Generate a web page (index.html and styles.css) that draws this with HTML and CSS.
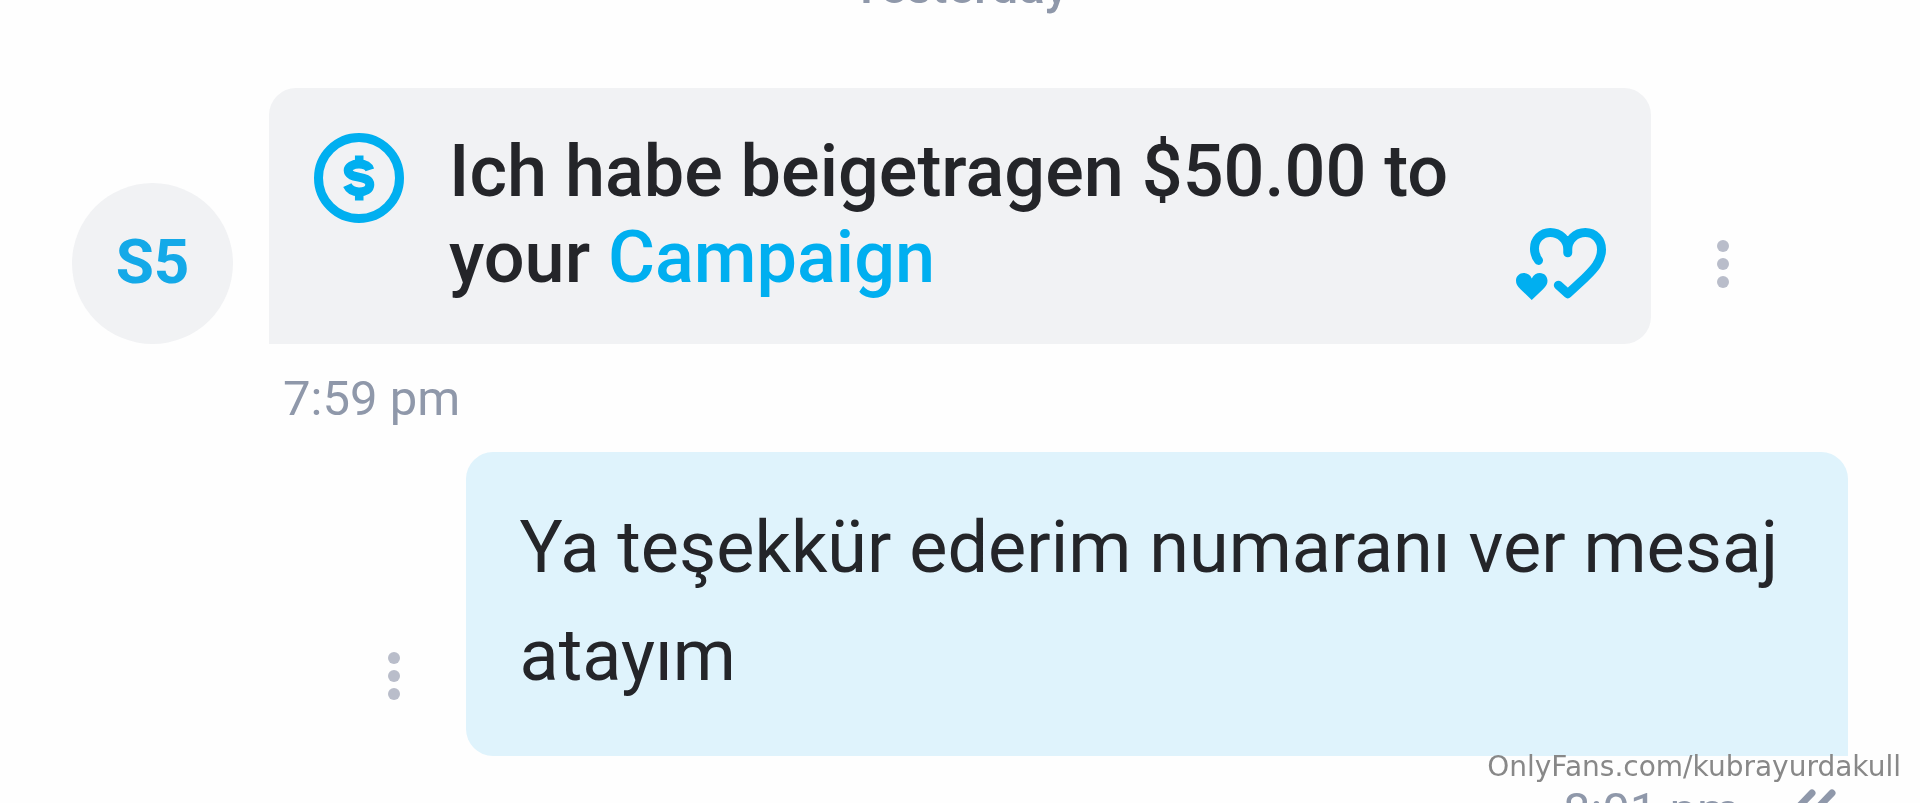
FILE: index.html
```html
<!DOCTYPE html>
<html lang="tr">
<head>
    <meta charset="UTF-8">
    <meta name="viewport" content="width=device-width, initial-scale=1.0">
    <title>Chat</title>
    <link rel="stylesheet" href="styles.css">
</head>
<body>
    <main class="chat">
        <div class="chat-date">Yesterday</div>

        <div class="message">
            <div class="message-row">
                <div class="avatar">S5</div>
                <div class="bubble bubble-tip">
                    <svg class="icon" viewBox="0 0 24 24" aria-hidden="true">
                        <circle cx="12" cy="12" r="9" fill="none" stroke="currentColor" stroke-width="2"/>
                        <path d="M14.4 10.2 C14.1 9.3 13.1 8.9 12 8.9 C10.6 8.9 9.6 9.5 9.6 10.3 C9.6 12.5 14.4 11.1 14.4 13.5 C14.4 14.5 13.4 15.1 12 15.1 C10.8 15.1 9.9 14.7 9.4 13.6" fill="none" stroke="currentColor" stroke-width="2"/>
                        <path d="M11.1 7h1.9v2h-1.9zM11.1 15h1.9v2h-1.9z" fill="currentColor"/>
                    </svg>
                    <p class="tip-text">Ich habe beigetragen $50.00 to your <a href="#">Campaign</a></p>
                    <button type="button" class="btn-like" aria-label="Like">
                        <svg class="icon" viewBox="0 0 24 24" aria-hidden="true">
                            <path d="M7 11.2 C6.4 10.4 6.1 9.4 6.1 8.6 C6.1 6.6 7.6 5 9.6 5 C11.8 5 13.5 6.7 13.5 8.7 V9.5 V8.7 C13.5 6.7 15.2 5 17.4 5 C19.5 5 21 6.6 21 8.8 C21 11.6 18.9 13.5 17.3 15.1 L13.5 18.6 L11.4 16.7" fill="none" stroke="currentColor" stroke-width="2" stroke-linecap="round" stroke-linejoin="round"/>
                            <path d="M5.5 20 L3 17.6 C2.3 16.9 2 16.4 2 15.7 C2 14.7 2.8 14 3.7 14 C4.5 14 5.2 14.4 5.5 15.2 C5.9 14.4 6.6 14 7.3 14 C8.3 14 9 14.8 9 15.7 C9 16.4 8.7 16.9 8 17.6 Z" fill="currentColor"/>
                        </svg>
                    </button>
                </div>
                <button type="button" class="btn-more" aria-label="More">
                    <svg class="icon" viewBox="0 0 108 108" fill="currentColor" aria-hidden="true">
                        <circle cx="54" cy="36" r="6"/>
                        <circle cx="54" cy="54" r="6"/>
                        <circle cx="54" cy="72" r="6"/>
                    </svg>
                </button>
            </div>
            <div class="message-time">7:59 pm</div>
        </div>

        <div class="message message-own">
            <div class="message-row">
                <button type="button" class="btn-more" aria-label="More">
                    <svg class="icon" viewBox="0 0 108 108" fill="currentColor" aria-hidden="true">
                        <circle cx="54" cy="36" r="6"/>
                        <circle cx="54" cy="54" r="6"/>
                        <circle cx="54" cy="72" r="6"/>
                    </svg>
                </button>
                <div class="bubble bubble-own">
                    <p>Ya teşekkür ederim numaranı ver mesaj atayım</p>
                </div>
            </div>
            <div class="message-time">
                8:01 pm
                <svg class="icon-read" viewBox="0 0 72 58" aria-hidden="true">
                    <path d="M2 28 L11 37 L36 11 M25 31 L31 37 L56 11" fill="none" stroke="currentColor" stroke-width="7" stroke-linecap="round"/>
                </svg>
            </div>
        </div>
    </main>

    <div class="watermark">OnlyFans.com/kubrayurdakull</div>
</body>
</html>
```

FILE: styles.css
```css
* {
    margin: 0;
    padding: 0;
    box-sizing: border-box;
}

body {
    font-family: Roboto, 'Liberation Sans', sans-serif;
    background: #fefefe;
    color: #242529;
    height: 100vh;
    overflow: hidden;
}

.chat {
    padding: 0 72px;
}

/* the list is scrolled, so the date is partly out of view */
.chat-date {
    margin-top: -42px;
    margin-bottom: 72px;
    font-size: 49px;
    line-height: 58px;
    font-weight: 500;
    text-align: center;
    color: #8f98aa;
}

.message-row {
    display: flex;
    align-items: flex-end;
}

.message-own .message-row {
    justify-content: flex-end;
}

.avatar {
    display: flex;
    align-items: center;
    justify-content: center;
    flex-shrink: 0;
    width: 161px;
    height: 161px;
    margin-right: 36px;
    padding-bottom: 4px;
    border-radius: 50%;
    background: #f1f2f4;
    color: #14a9e8;
    font-size: 62px;
    font-weight: 700;
}

.bubble {
    width: 72vw;
    border-radius: 27px;
    font-size: 72px;
}

.bubble-tip {
    display: flex;
    gap: 36px;
    padding: 36px 36px 26px;
    border-bottom-left-radius: 0;
    background: #f1f2f4;
}

.bubble-own {
    padding: 42px 54px 46px;
    border-bottom-right-radius: 0;
    background: #dff3fc;
    line-height: 108px;
}

.icon {
    display: block;
    flex-shrink: 0;
    width: 108px;
    height: 108px;
}

.bubble-tip .icon {
    color: #00aff0;
}

.tip-text {
    flex: 1;
    padding: 5px 0 17px;
    font-weight: 500;
    line-height: 86px;
}

.tip-text a {
    color: #00aff0;
    text-decoration: none;
}

button {
    border: none;
    background: none;
    cursor: pointer;
}

.btn-like {
    align-self: flex-end;
}

.btn-more {
    margin: 0 18px 26px;
    color: #b9bdca;
}

.message-time {
    display: flex;
    align-items: center;
    margin-left: 197px;
    padding: 26px 14px 24px;
    font-size: 49px;
    line-height: 58px;
    color: #8f98aa;
}

.message-own .message-time {
    justify-content: flex-end;
    gap: 36px;
    margin-left: 0;
    padding-right: 0;
}

.icon-read {
    width: 72px;
    height: 58px;
}

.watermark {
    position: fixed;
    right: 19px;
    bottom: 19px;
    font-family: 'DejaVu Sans', sans-serif;
    font-size: 28px;
    line-height: 34px;
    color: #888;
}
```
